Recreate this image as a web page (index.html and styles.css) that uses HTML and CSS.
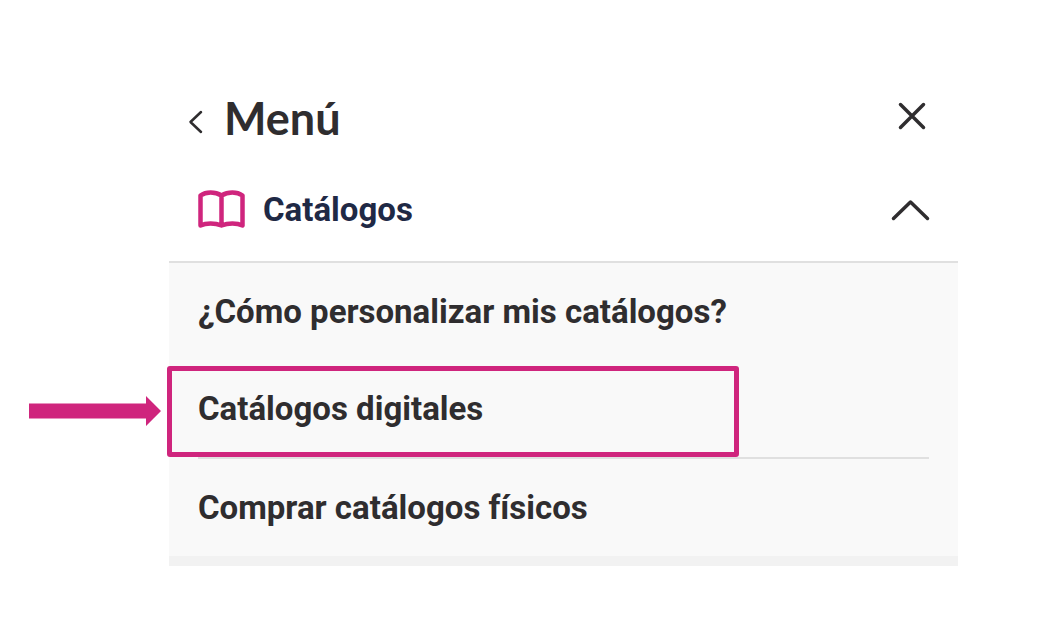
FILE: index.html
```html
<!DOCTYPE html>
<html lang="es">
<head>
<meta charset="utf-8">
<meta name="viewport" content="width=device-width, initial-scale=1">
<title>Menú</title>
<link rel="stylesheet" href="styles.css">
</head>
<body>
<main class="menu">
  <header class="menu-header">
    <button class="icon-button" type="button" aria-label="Volver">
      <svg width="16" height="26" viewBox="0 0 16 26"><path class="stroke stroke-thin" d="M13 3 2.500 13l10.500 10"/></svg>
    </button>
    <h1 class="title">Menú</h1>
    <button class="icon-button close" type="button" aria-label="Cerrar">
      <svg width="32" height="32" viewBox="0 0 32 32"><path class="stroke" d="M4.500 4.500 27.500 27.500M27.500 4.500 4.500 27.500"/></svg>
    </button>
  </header>
  <button class="section" type="button" aria-expanded="true">
    <svg class="book" width="48" height="40" viewBox="0 0 48 40"><path d="M24.500 5.500C18 1.500 9 1.500 3.500 5.500V35.500C9 32.800 18 32.800 24.500 35.500C31 32.800 40 32.800 45.500 35.500V5.500C40 1.500 31 1.500 24.500 5.500V35.500"/></svg>
    <span class="section-name">Catálogos</span>
    <svg class="chevron" width="40" height="24" viewBox="0 0 40 24"><path class="stroke" d="M3.500 20.500 20.500 4 37.500 20.500"/></svg>
  </button>
  <nav class="links" aria-label="Catálogos">
    <a class="link" href="#personalizar">¿Cómo personalizar mis catálogos?</a>
    <div class="marked">
      <a class="link ruled" href="#digitales">Catálogos digitales</a>
      <span class="frame"></span>
      <svg class="arrow" width="132" height="30" viewBox="0 0 132 30"><path d="M0 7.500H117V0L132 15 117 30V22.500H0Z"/></svg>
    </div>
    <a class="link" href="#fisicos">Comprar catálogos físicos</a>
  </nav>
</main>
</body>
</html>
```
FILE: styles.css
```css
* {
  box-sizing: border-box;
}

body {
  margin: 0;
  padding: 80px 94px 62px 169px;
  background: #fff;
  color: #2f2d2f;
  font-family: Roboto, "Liberation Sans", sans-serif;
}

button {
  border: 0;
  padding: 0;
  background: none;
  color: inherit;
  font: inherit;
  cursor: pointer;
}

svg {
  display: block;
}

.stroke {
  fill: none;
  stroke: #2f2d2f;
  stroke-width: 3.5;
  stroke-linecap: round;
  stroke-linejoin: round;
}

.stroke-thin {
  stroke-width: 2.5;
}

.menu-header {
  display: flex;
  align-items: center;
  gap: 20px;
  height: 76px;
  padding: 0 30px 0 19px;
}

.icon-button {
  padding-top: 8px;
}

.title {
  margin: 0;
  font-family: Lato, sans-serif;
  font-size: 45px;
  font-weight: 700;
  line-height: 56px;
}

.close {
  margin-left: auto;
  padding: 0 0 4px;
}

.section {
  display: flex;
  align-items: center;
  width: 100%;
  height: 107px;
  padding: 2px 28px 0;
  border-bottom: 2px solid #e0e0e0;
  color: #1f2945;
}

.book {
  fill: none;
  stroke: #cf257d;
  stroke-width: 4.5;
  stroke-linecap: round;
  stroke-linejoin: round;
}

.section-name {
  margin-left: 18px;
  font-size: 33px;
  font-weight: 700;
  line-height: 40px;
}

.chevron {
  margin-left: auto;
}

.links {
  border-bottom: 10px solid #f2f2f2;
  background: #f9f9f9;
}

.link {
  display: block;
  margin: 0 29px;
  padding: 29px 0 28px;
  color: inherit;
  font-size: 33px;
  font-weight: 700;
  line-height: 40px;
  text-decoration: none;
}

.ruled {
  border-bottom: 2px solid #e0e0e0;
}

.marked {
  position: relative;
}

.frame {
  position: absolute;
  top: 6px;
  left: -2px;
  width: 572px;
  height: 91px;
  border: 5px solid #cf257d;
  border-radius: 3px;
}

.arrow {
  position: absolute;
  top: 36px;
  left: -140px;
  fill: #cf257d;
}
```
